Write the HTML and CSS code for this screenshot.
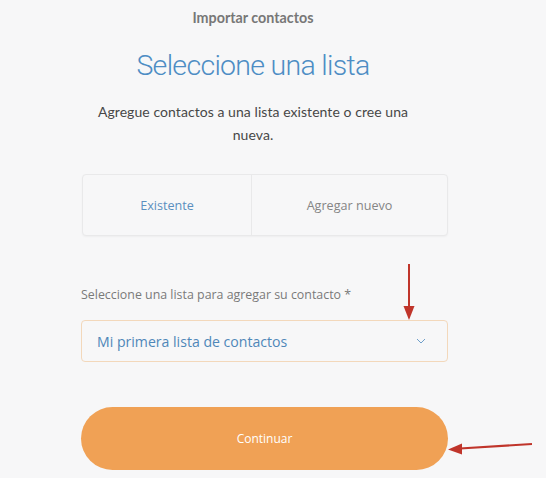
FILE: index.html
```html
<!DOCTYPE html>
<html lang="es">
<head>
<meta charset="utf-8">
<title>Importar contactos</title>
<link rel="stylesheet" href="styles.css">
</head>
<body>
<div class="page">
  <header class="intro">
    <div class="top-title">Importar contactos</div>
    <h1 class="title">Seleccione una lista</h1>
    <p class="subtitle">Agregue contactos a una lista existente o cree una nueva.</p>
  </header>
  <section class="form">
    <div class="tabs">
      <div class="tab tab-active">Existente</div>
      <div class="tab">Agregar nuevo</div>
    </div>
    <label class="field-label">Seleccione una lista para agregar su contacto *</label>
    <div class="select">
      <span class="select-value">Mi primera lista de contactos</span>
      <svg class="chevron" width="10" height="6" viewBox="0 0 10 6"><path d="M1 1 L5 5 L9 1" fill="none" stroke="#6f9fca" stroke-width="1"/></svg>
    </div>
    <button class="btn">Continuar</button>
  </section>
  <svg class="annotations" width="546" height="478" viewBox="0 0 546 478">
    <line x1="409" y1="264" x2="409" y2="309" stroke="#c0352b" stroke-width="2"/>
    <polygon points="403.5,306 414.5,306 409,320" fill="#c0352b"/>
    <line x1="532" y1="444" x2="460" y2="448.5" stroke="#c0352b" stroke-width="2"/>
    <polygon points="448,449.5 462,443.5 462,454.5" fill="#c0352b"/>
  </svg>
</div>
</body>
</html>
```
FILE: styles.css
```css
html, body {
  margin: 0;
  padding: 0;
  background: #f7f7f8;
}
body {
  font-family: "Open Sans", "Liberation Sans", sans-serif;
  width: 546px;
  height: 478px;
  overflow: hidden;
}
.page {
  position: relative;
  width: 529px;
  height: 478px;
}
.intro {
  width: 506px;
  text-align: center;
  padding-top: 8px;
}
.top-title {
  font-family: "Lato", sans-serif;
  font-weight: 700;
  font-size: 14.3px;
  line-height: 20px;
  color: #777777;
}
.title {
  margin: 18px 0 0;
  font-family: "Roboto", sans-serif;
  font-weight: 300;
  font-size: 28.5px;
  letter-spacing: -0.7px;
  line-height: 40px;
  color: #4d8dc4;
}
.subtitle {
  margin: 14px auto 0;
  width: 330px;
  font-family: "Lato", sans-serif;
  font-size: 14px;
  letter-spacing: 0.06px;
  line-height: 23px;
  color: #474747;
}
.form {
  margin-left: 81px;
  width: 367px;
  padding-top: 28px;
}
.tabs {
  display: grid;
  grid-template-columns: 168px 1fr;
  height: 62px;
  margin-left: 1px;
  border: 1px solid #e9e9ea;
  border-radius: 4px;
  box-shadow: 0 1px 2px rgba(0,0,0,0.04);
  background: #f7f7f8;
  box-sizing: border-box;
}
.tab {
  display: flex;
  align-items: center;
  justify-content: center;
  font-size: 12.6px;
  color: #858585;
}
.tab + .tab {
  border-left: 1px solid #e9e9ea;
}
.tab-active {
  color: #5a8fbf;
}
.field-label {
  display: block;
  margin-top: 50px;
  font-size: 12.4px;
  line-height: 18px;
  color: #7a7a7a;
}
.select {
  margin-top: 16px;
  height: 42px;
  box-sizing: border-box;
  border: 1px solid #f3d8bb;
  border-radius: 4px;
  display: flex;
  align-items: center;
  justify-content: space-between;
  padding: 0 21px 0 15px;
}
.select-value {
  font-size: 14.1px;
  color: #4f87b8;
}
.chevron {
  display: block;
}
.btn {
  display: block;
  margin-top: 45px;
  width: 367px;
  height: 63px;
  border: 0;
  border-radius: 32px;
  background: #f0a155;
  color: #fff;
  font-family: "Open Sans", sans-serif;
  font-size: 12px;
}
.annotations {
  position: absolute;
  left: 0;
  top: 0;
  pointer-events: none;
}
```
